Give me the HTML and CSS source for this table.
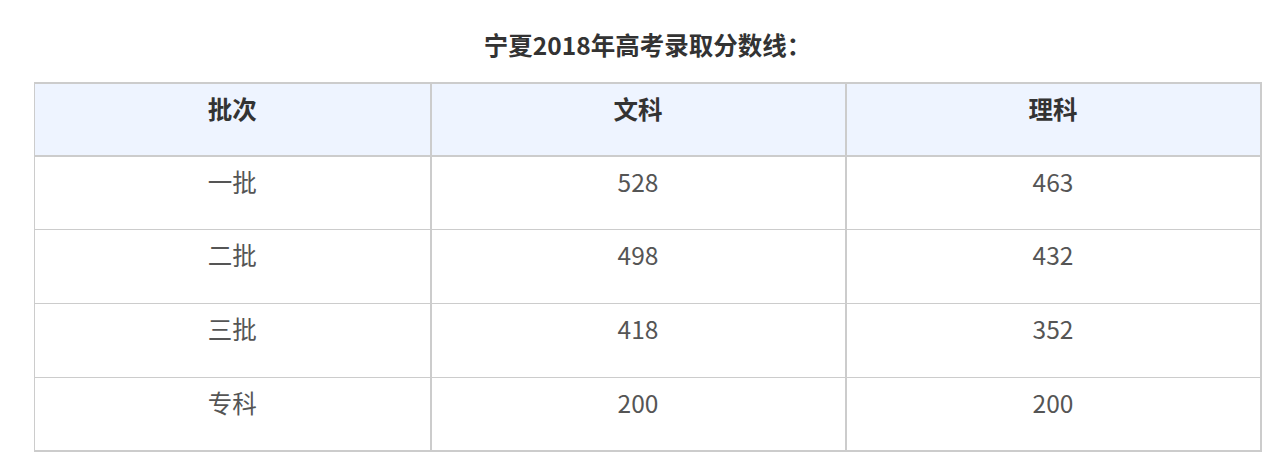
FILE: index.html
```html
<!DOCTYPE html>
<html lang="zh-CN">
<head>
<meta charset="utf-8">
<title>宁夏2018年高考录取分数线</title>
<link rel="stylesheet" href="styles.css">
</head>
<body>
<div class="wrap">
  <h2 class="title">宁夏2018年高考录取分数线：</h2>
  <table class="score">
    <colgroup>
      <col class="c1"><col class="c2"><col class="c3">
    </colgroup>
    <thead>
      <tr><th>批次</th><th>文科</th><th>理科</th></tr>
    </thead>
    <tbody>
      <tr><td>一批</td><td>528</td><td>463</td></tr>
      <tr><td>二批</td><td>498</td><td>432</td></tr>
      <tr><td>三批</td><td>418</td><td>352</td></tr>
      <tr><td>专科</td><td>200</td><td>200</td></tr>
    </tbody>
  </table>
</div>
</body>
</html>
```

FILE: styles.css
```css
html, body {
  margin: 0;
  padding: 0;
  background: #ffffff;
}
body {
  font-family: "Noto Sans CJK SC", "Noto Sans", sans-serif;
}
.wrap {
  margin-left: 34px;
  width: 1227px;
  padding-top: 27px;
}
.title {
  margin: 0 0 19px;
  font-size: 24.5px;
  line-height: 36px;
  font-weight: 700;
  color: #333333;
  text-align: center;
}
.score {
  width: 1227px;
  border-collapse: collapse;
  table-layout: fixed;
  border-left: 1px solid #cccccc;
  border-right: 2px solid #cccccc;
  border-bottom: 2px solid #cccccc;
  border-top: 2px solid #cccccc;
}
.c1 { width: 396px; }
.c2 { width: 415px; }
.c3 { width: 415px; }
.score th,
.score td {
  border: 1px solid #cccccc;
  text-align: center;
  vertical-align: top;
  font-size: 24.5px;
  line-height: 36px;
  box-sizing: border-box;
}
.score th + th,
.score td + td {
  border-left: 2px solid #cccccc;
}
.score th {
  background: #eef4ff;
  color: #333333;
  font-weight: 700;
  height: 73px;
  padding: 7px 0 0;
  border-bottom: 2px solid #cccccc;
}
.score td {
  color: #555555;
  font-weight: 400;
  height: 73.7px;
  padding: 7px 0 0;
}
```
